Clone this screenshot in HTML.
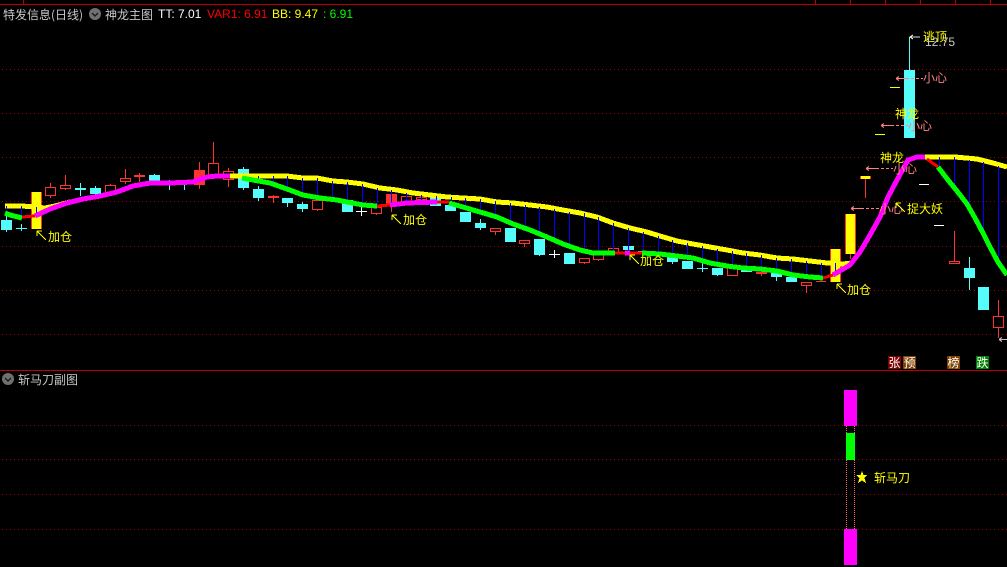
<!DOCTYPE html>
<html><head><meta charset="utf-8">
<style>
html,body{margin:0;padding:0;background:#000;width:1007px;height:567px;overflow:hidden}
svg{display:block;position:absolute;left:0;top:0}
text{font-family:"WenQuanYi Zen Hei","Noto Sans CJK SC",sans-serif;font-size:12px}
.l{font-family:"Liberation Sans",sans-serif;font-size:12px}
.y{fill:#ffff00}.p{fill:#ff8080}.g{fill:#c8c8c8}.w{fill:#fff}
.wr{stroke:#ff3232;fill:none}.wc{stroke:#54fcfc;fill:none}.hr{fill:#000;stroke:#ff3232}
.R{fill:#ff3232}.C{fill:#54fcfc}
.ln{fill:none;stroke-width:5;stroke-linejoin:round}
</style></head><body>
<svg width="1007" height="567" viewBox="0 0 1007 567" shape-rendering="crispEdges">
<defs><pattern id="dots" x="2" y="0" width="4" height="1" patternUnits="userSpaceOnUse"><rect width="1" height="1" fill="#a00000"/></pattern></defs>
<rect width="1007" height="567" fill="#000"/>
<g fill="url(#dots)">
<rect y="69" width="1007" height="1"/><rect y="113" width="1007" height="1"/><rect y="157" width="1007" height="1"/><rect y="201" width="1007" height="1"/><rect y="246" width="1007" height="1"/><rect y="290" width="1007" height="1"/><rect y="334" width="1007" height="1"/><rect y="425" width="1007" height="1"/><rect y="459" width="1007" height="1"/><rect y="494" width="1007" height="1"/><rect y="529" width="1007" height="1"/>
</g>
<path d="M0 4.5H1007M0 370.5H1007" stroke="#c00000" fill="none"/>
<path d="M23.5 0V4M815.5 0V4M850.5 0V4M885.5 0V4M920.5 0V4M955.5 0V4M990.5 0V4" stroke="#c00000" fill="none"/>

<!-- red candle wicks -->
<path class="wr" d="M50.5 183V198M65.5 175V190M110.5 184V195M125.5 169V184M139.5 173V182M199.5 162V189M213.5 142V178M228.5 168V187M273.5 195V203M317.5 200V211M376.5 207V215M391.5 191V212M406.5 196V205M421.5 195V200M495.5 228V235M524.5 240V247M584.5 258V264M598.5 254V261M613.5 248V254M761.5 270V276M806.5 282V293M850.5 254V259M865.5 176V198M954.5 231V264M998.5 300V338"/>
<!-- cyan wicks -->
<path class="wc" d="M6.5 215V232M21.5 224V231M80.5 183V196M95.5 186V195M154.5 174V182M169.5 180V190M184.5 180V190M243.5 167V190M258.5 186V201M287.5 198V207M302.5 202V212M480.5 219V230M539.5 239V256M672.5 256V264M702.5 260V272M717.5 268V276M776.5 273V281M909.5 37V70M969.5 257V290"/>
<path d="M361.5 207V216M356 211.5H367M554.5 250V258M549 254.5H560" stroke="#fff" fill="none"/>
<!-- cyan bodies -->
<g class="C">
<rect x="1" y="220" width="11" height="10"/><rect x="16" y="228" width="11" height="1"/><rect x="75" y="188" width="11" height="2"/><rect x="90" y="188" width="11" height="6"/><rect x="149" y="175" width="11" height="6"/><rect x="238" y="169" width="11" height="19"/><rect x="253" y="189" width="11" height="9"/><rect x="282" y="198" width="11" height="5"/><rect x="297" y="204" width="11" height="5"/><rect x="342" y="200" width="11" height="12"/><rect x="430" y="197" width="11" height="9"/><rect x="445" y="205" width="11" height="6"/><rect x="460" y="212" width="11" height="10"/><rect x="475" y="223" width="11" height="5"/><rect x="505" y="228" width="11" height="14"/><rect x="534" y="239" width="11" height="16"/><rect x="564" y="253" width="11" height="11"/><rect x="623" y="246" width="11" height="4"/><rect x="638" y="251" width="11" height="3"/><rect x="667" y="256" width="11" height="6"/><rect x="682" y="261" width="11" height="8"/><rect x="697" y="268" width="11" height="1"/><rect x="712" y="268" width="11" height="7"/><rect x="741" y="270" width="11" height="2"/><rect x="771" y="273" width="11" height="4"/><rect x="786" y="277" width="11" height="5"/><rect x="904" y="70" width="11" height="68"/><rect x="964" y="268" width="11" height="10"/><rect x="978" y="287" width="11" height="23"/>
</g>
<!-- red hollow bodies -->
<g class="hr">
<rect x="45.5" y="187.5" width="10" height="8"/><rect x="60.5" y="185.5" width="10" height="3"/><rect x="105.5" y="185.5" width="10" height="8"/><rect x="120.5" y="178.5" width="10" height="3"/><rect x="208.5" y="163.5" width="10" height="14"/><rect x="223.5" y="171.5" width="10" height="8"/><rect x="312.5" y="200.5" width="10" height="9"/><rect x="371.5" y="207.5" width="10" height="6"/><rect x="401.5" y="196.5" width="10" height="8"/><rect x="416.5" y="197.5" width="10" height="2"/><rect x="490.5" y="228.5" width="10" height="3"/><rect x="519.5" y="240.5" width="10" height="3"/><rect x="579.5" y="258.5" width="10" height="4"/><rect x="593.5" y="254.5" width="10" height="5"/><rect x="608.5" y="248.5" width="10" height="4"/><rect x="727.5" y="266.5" width="10" height="9"/><rect x="801.5" y="282.5" width="10" height="3"/><rect x="949.5" y="261.5" width="10" height="2"/><rect x="993.5" y="316.5" width="10" height="11"/>
</g>
<!-- red solid -->
<g class="R">
<rect x="134" y="175" width="11" height="2"/><rect x="194" y="170" width="11" height="15"/><rect x="268" y="196" width="11" height="2"/><rect x="386" y="194" width="11" height="12"/><rect x="756" y="272" width="11" height="2"/><rect x="816" y="281" width="10" height="1"/>
<rect x="31" y="192" width="11" height="37"/><rect x="830" y="249" width="11" height="33"/><rect x="845" y="214" width="11" height="40"/><rect x="860" y="176" width="11" height="3"/>
</g>
<g fill="#ffff00">
<rect x="32" y="192" width="9" height="37"/><rect x="831" y="249" width="9" height="33"/><rect x="846" y="214" width="9" height="40"/><rect x="861" y="176" width="9" height="3"/>
<rect x="890" y="87" width="10" height="1"/><rect x="875" y="134" width="10" height="1"/>
</g>
<rect x="919" y="184" width="10" height="1" fill="#fff"/><rect x="934" y="225" width="10" height="1" fill="#fff"/>

<!-- yellow line -->
<g stroke="#ffff00">
<polyline class="ln" points="5,206 22,206 35,207 45,208 55,206 70,202"/>
<polyline class="ln" points="228,176 287,176 303,178 317,178 333,181 347,182 363,184 380,188 397,190 413,193 430,195 447,197 463,198 480,199 497,202 513,203 530,205 547,207 563,210 580,213 597,217 613,223 630,228 647,232 660,236 677,241 693,244 710,247 727,250 743,253 760,255 777,258 793,259 810,261 827,263 843,264 852,263"/>
<polyline class="ln" points="924,157 955,157 977,159 993,163 1007,167"/>
</g>
<!-- blue -->
<path stroke="#0000ff" fill="none" d="M6.5 206V213M21.5 206V218M36.5 207V216M243.5 176V178M258.5 176V181M273.5 176V184M287.5 176V189M302.5 178V195M317.5 178V198M332.5 181V199M347.5 182V202M362.5 184V205M377.5 188V206M391.5 190V205M406.5 193V203M421.5 195V202M436.5 196V202M451.5 197V203M465.5 198V208M480.5 199V212M495.5 201V217M510.5 203V222M525.5 205V228M539.5 207V234M554.5 209V240M569.5 212V246M584.5 213V250M598.5 217V252M613.5 223V253M628.5 228V253M643.5 232V253M658.5 236V254M672.5 240V255M687.5 243V257M702.5 246V260M717.5 249V265M732.5 251V267M746.5 253V268M761.5 255V269M776.5 258V271M791.5 259V275M806.5 261V277M821.5 263V278M835.5 263V275M939.5 157V167M954.5 157V187M969.5 160V206M983.5 162V233M998.5 166V262"/>
<!-- green -->
<g>
<polyline class="ln" stroke="#00ff00" points="5,213 10,215 22,218"/>
<polyline class="ln" stroke="#00ff00" points="242,178 253,180 270,183 287,189 303,195 320,198 337,200 347,202 363,205 377,206"/>
<polyline class="ln" stroke="#00ff00" points="449,203 463,207 480,212 497,217 513,224 530,230 547,237 563,244 580,250 593,253 615,253"/>
<polyline class="ln" stroke="#00ff00" points="642,253 660,254 677,256 693,258 710,263 727,266 743,268 760,269 777,271 793,275 810,277 823,278"/>
<polyline class="ln" stroke="#00ff00" points="938,167 948,180 957,191 967,204 975,218 983,233 990,247 998,262 1007,275"/>
</g>
<!-- red line -->
<g fill="none" stroke="#ff0000" stroke-width="3">
<polyline points="22,217 35,216"/>
<polyline points="377,206 390,205"/>
<polyline points="437,202 449,202"/>
<polyline points="615,253 642,253"/>
<polyline points="823,278 833,275"/>
<polyline points="927,159 938,167"/>
</g>
<!-- magenta -->
<g>
<polyline class="ln" stroke="#ff00ff" points="35,216 50,209 67,203 83,199 100,196 117,192 133,186 150,183 170,183 193,182 207,177 217,176 230,176"/>
<polyline class="ln" stroke="#ff00ff" points="390,205 407,203 437,202"/>
<polyline class="ln" stroke="#ff00ff" points="625,253 630,253"/>
<polyline class="ln" stroke="#ff00ff" points="833,275 850,265 860,252 870,235 880,217 888,197 897,180 908,160 917,157 925,157"/>
</g>

<!-- pink arrows -->
<g stroke="#ff8080" fill="none">
<path d="M896 78.5H906M881 125.5H891M866 168.5H876M851 208.5H861"/>
<path d="M906 78.5H923M891 125.5H908M876 168.5H893M861 208.5H879" stroke-dasharray="3 2"/>
<path d="M896 78.5l3 -2M896 78.5l3 2M881 125.5l3 -2M881 125.5l3 2M866 168.5l3 -2M866 168.5l3 2M851 208.5l3 -2M851 208.5l3 2"/>
</g>
<text x="923" y="82" class="p">小心</text>
<text x="908" y="130" class="p">小心</text>
<text x="893" y="173" class="p">小心</text>
<text x="879" y="213" class="p">小心</text>
<!-- yellow arrows -->
<g stroke="#ffff00" fill="none">
<path d="M37 231L46 240M37 231h5M37 231v5M392 215L401 224M392 215h5M392 215v5M630 255L639 264M630 255h5M630 255v5M837 284L846 293M837 284h5M837 284v5M896 203L905 212M896 203h5M896 203v5"/>
</g>
<text x="48" y="241" class="y">加仓</text>
<text x="403" y="224" class="y">加仓</text>
<text x="640" y="265" class="y">加仓</text>
<text x="847" y="294" class="y">加仓</text>
<text x="907" y="213" class="y">捉大妖</text>
<text x="895" y="118" class="y">神龙</text>
<text x="880" y="162" class="y">神龙</text>
<text x="923" y="41" class="y">逃顶</text>
<path d="M909.5 37H920M910 37l3 -2M910 37l3 2" stroke="#e0e0e0" fill="none"/>
<text x="925" y="46" class="l g">12.75</text>
<path d="M999 339.5H1007M999 339.5l3 -2M999 339.5l3 2" stroke="#c0c0c0" fill="none"/>

<!-- badges -->
<rect x="888" y="356" width="13" height="13" fill="#800000"/><text x="888.5" y="367" class="w">张</text>
<rect x="903" y="356" width="13" height="13" fill="#804000"/><text x="903.5" y="367" class="w">预</text>
<rect x="947" y="356" width="13" height="13" fill="#804000"/><text x="947.5" y="367" class="w">榜</text>
<rect x="976" y="356" width="13" height="13" fill="#008000"/><text x="976.5" y="367" class="w">跌</text>

<!-- header -->
<text x="3" y="19" class="g">特发信息(日线)</text>
<circle cx="95" cy="14" r="6" fill="#707070" shape-rendering="auto"/>
<path d="M92 13l3 3 3 -3" stroke="#1a1a1a" stroke-width="1.4" fill="none" shape-rendering="auto"/>
<text x="105" y="19" class="g">神龙主图</text>
<text x="158" y="18" class="l w">TT: 7.01</text>
<text x="207" y="18" class="l" fill="#ff0000">VAR1: 6.91</text>
<text x="272" y="18" class="l y">BB: 9.47</text>
<text x="323" y="18" class="l" fill="#00ff00">: 6.91</text>

<!-- sub chart -->
<circle cx="8" cy="379" r="6" fill="#707070" shape-rendering="auto"/>
<path d="M5 378l3 3 3 -3" stroke="#1a1a1a" stroke-width="1.4" fill="none" shape-rendering="auto"/>
<text x="18" y="384" class="g">斩马刀副图</text>
<path d="M846.5 426V529M854.5 426V529" stroke="#ff6060" stroke-dasharray="1 1" fill="none"/>
<rect x="844" y="390" width="13" height="36" fill="#ff00ff"/>
<rect x="846" y="433" width="9" height="27" fill="#00ff00"/>
<rect x="844" y="529" width="13" height="36" fill="#ff00ff"/>
<polygon points="862,471 863.5,475 867,475 864.5,478 866,483 862,480.5 858,483 859.5,478 856,475 860.5,475" fill="#ffff00"/>
<text x="874" y="482" class="y">斩马刀</text>
</svg>
</body></html>
